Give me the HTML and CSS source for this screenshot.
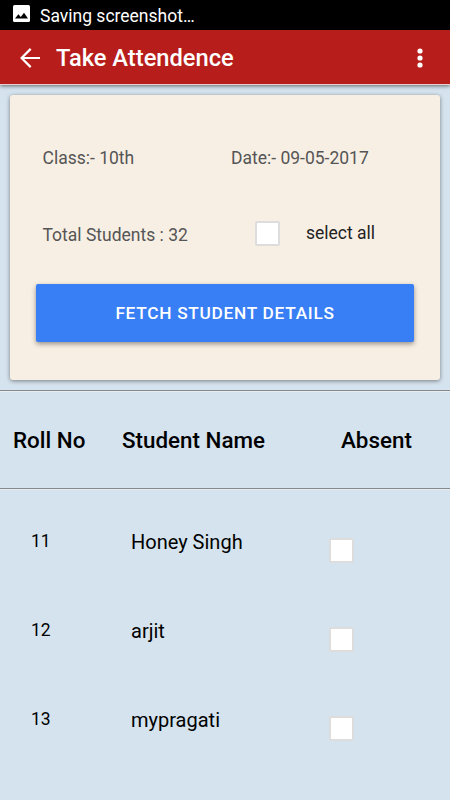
FILE: index.html
```html
<!DOCTYPE html>
<html lang="en">
<head>
    <meta charset="UTF-8">
    <title>Take Attendence</title>
    <link rel="stylesheet" href="styles.css">
</head>
<body>

    <div class="status-bar">
        <svg class="picture-icon" width="17" height="17" viewBox="0 0 17 17">
            <rect width="17" height="17" rx="1.5" fill="#fff"/>
            <path d="M2 13.5 L5.4 9.3 L7.8 12 L11 7.8 L15 13.5 Z" fill="#000"/>
        </svg>
        <span>Saving screenshot…</span>
    </div>

    <div class="toolbar">
        <svg class="back-icon" width="20" height="20" viewBox="0 0 20 20">
            <path d="M20 10 H2 M10.7 .9 L1.6 10 L10.7 19.1" fill="none" stroke="#fff" stroke-width="2.2"/>
        </svg>
        <h1>Take Attendence</h1>
        <svg class="more-icon" width="6" height="20" viewBox="0 0 6 20">
            <circle cx="3" cy="3" r="2.6" fill="#fff"/>
            <circle cx="3" cy="10" r="2.6" fill="#fff"/>
            <circle cx="3" cy="17" r="2.6" fill="#fff"/>
        </svg>
    </div>

    <div class="card">
        <div class="card-row">
            <span class="class-name">Class:- 10th</span>
            <span class="date">Date:- 09-05-2017</span>
        </div>
        <div class="card-row total-row">
            <span class="total">Total Students : 32</span>
            <label class="select-all">
                <input type="checkbox">
                <span>select all</span>
            </label>
        </div>
        <button class="fetch-button">FETCH STUDENT DETAILS</button>
    </div>

    <hr>
    <div class="table-row table-head">
        <span>Roll No</span>
        <span>Student Name</span>
        <span>Absent</span>
    </div>
    <hr>

    <!-- Student list -->
    <div class="students">
        <div class="table-row student">
            <span class="roll">11</span>
            <span class="name">Honey Singh</span>
            <input type="checkbox">
        </div>
        <div class="table-row student">
            <span class="roll">12</span>
            <span class="name">arjit</span>
            <input type="checkbox">
        </div>
        <div class="table-row student">
            <span class="roll">13</span>
            <span class="name">mypragati</span>
            <input type="checkbox">
        </div>
    </div>

</body>
</html>
```

FILE: styles.css
```css
* {
    box-sizing: border-box;
}

body {
    font-family: Roboto, sans-serif;
    margin: 0;
    height: 800px;
    overflow: hidden;
    background-color: #d5e3ee;
    color: #000;
}

.status-bar {
    display: flex;
    align-items: center;
    height: 30px;
    padding-left: 13px;
    background-color: #000;
    color: #fff;
    font-size: 17.5px;
}

.status-bar span {
    padding-top: 2px;
}

.picture-icon {
    margin: 0 10px 3px 0;
}

.toolbar {
    display: flex;
    align-items: center;
    height: 55px;
    padding: 1px 27px 0 20px;
    background-color: #b71d1a;
    border-bottom: 1px solid #e9cfcf;
    box-shadow: 0 1px 4px rgba(0, 0, 0, 0.55);
    color: #fff;
}

.toolbar h1 {
    flex: 1;
    margin: 0 0 0 16px;
    font-size: 23.7px;
    font-weight: 500;
}

.card {
    height: 285px;
    margin: 10px 10px;
    padding: 52px 26px 0 26px;
    border-radius: 3px;
    background-color: #f8efe4;
    box-shadow: 0 1px 4px rgba(0, 0, 0, 0.45);
}

.card-row {
    display: flex;
    height: 22px;
    padding-left: 6.5px;
    font-size: 17.5px;
    line-height: 22px;
    color: #555;
}

.class-name {
    width: 188.5px;
}

.total-row {
    margin-top: 55px;
}

.total {
    width: 212.5px;
}

.select-all {
    display: flex;
    align-items: center;
    height: 18px;
    color: #222;
}

.select-all span {
    margin-left: 26px;
}

input[type="checkbox"] {
    appearance: none;
    width: 25px;
    height: 25px;
    margin: 0;
    border: 2px solid #ddd;
    border-radius: 2px;
    background-color: #fff;
}

.fetch-button {
    display: block;
    width: 100%;
    height: 58px;
    margin-top: 38px;
    border: none;
    border-radius: 2px;
    background-color: #387ef5;
    box-shadow: 0 2px 5px rgba(0, 0, 0, 0.4);
    color: #fff;
    font-family: inherit;
    font-size: 17.3px;
    font-weight: 500;
    letter-spacing: 0.7px;
}

hr {
    height: 2px;
    margin: 0;
    border: none;
    border-top: 1px solid #858a8e;
    border-bottom: 1px solid #e8edf0;
}

.table-row {
    display: grid;
    grid-template-columns: 109px 219px 1fr;
    align-items: center;
}

.table-head {
    height: 96px;
    padding-left: 13px;
    font-size: 22.4px;
    font-weight: 500;
}

.students {
    padding-top: 7px;
}

.student {
    grid-template-columns: 100px 198px 1fr;
    height: 89px;
    padding-left: 31px;
}

.roll {
    margin-bottom: 1px;
    font-size: 17.5px;
}

.name {
    font-size: 20px;
}

.student input[type="checkbox"] {
    margin-top: 17px;
}
```
